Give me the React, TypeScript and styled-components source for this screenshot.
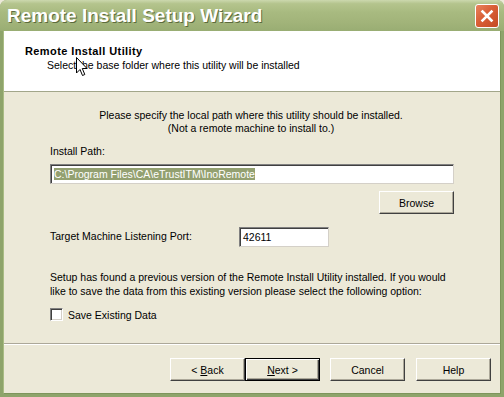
import React, { FC } from 'react';
import styled, { createGlobalStyle } from 'styled-components';

const GlobalStyle = createGlobalStyle`
  html, body {
    margin: 0;
    padding: 0;
    background: #ECE9D8;
  }
  body {
    font-family: "Liberation Sans", Arial, sans-serif;
    font-size: 10.5px;
    color: #000;
  }
`;

const Window = styled.div`
  position: relative;
  width: 504px;
  height: 397px;
  display: flex;
  flex-direction: column;
  background: #8EA46B;
  border-radius: 7px 7px 0 0;
  overflow: hidden;
  box-sizing: border-box;
`;

const TitleBar = styled.div`
  height: 31px;
  flex: none;
  display: flex;
  align-items: center;
  justify-content: space-between;
  padding: 0 5px 0 7px;
  box-sizing: border-box;
  background: linear-gradient(180deg, #CCD8AE 0%, #B4C48D 12%, #A8BA80 40%, #A2B47A 70%, #99AD73 100%);
`;

const Title = styled.div`
  font-family: "Liberation Sans", Arial, sans-serif;
  font-weight: bold;
  font-size: 19px;
  color: #fff;
  text-shadow: 1px 1px 0 #5C6B3C;
  margin-top: 1px;
`;

const CloseButton = styled.div`
  width: 22px;
  height: 22px;
  border: 1px solid #fff;
  border-radius: 3px;
  background: linear-gradient(135deg, #E8835E 0%, #D95F36 45%, #C44A22 100%);
  display: flex;
  align-items: center;
  justify-content: center;
  margin-top: 1px;
`;

const Frame = styled.div`
  flex: 1;
  display: flex;
  flex-direction: column;
  margin: 0 3px 3px;
  border-left: 1px solid #A9BC84;
  border-right: 1px solid #7E955C;
  border-bottom: 1px solid #7E955C;
  background: #ECE9D8;
`;

const Header = styled.div`
  height: 61px;
  flex: none;
  background: #fff;
  border-bottom: 1px solid #A2A68A;
  padding: 14px 0 0 21px;
  box-sizing: border-box;
`;

const HeaderTitle = styled.div`
  font-weight: bold;
  font-size: 11px;
  letter-spacing: 0.4px;
  line-height: 13px;
`;

const HeaderSub = styled.div`
  margin: 1px 0 0 22px;
  line-height: 13px;
`;

const Body = styled.div`
  flex: 1;
  display: flex;
  flex-direction: column;
  padding: 17px 46px 0 46px;
  white-space: nowrap;
`;

const Centered = styled.div`
  text-align: center;
  line-height: 13px;
  margin-right: 2px;
`;

const Label = styled.div<{ top: number }>`
  line-height: 13px;
  margin-top: ${(p) => p.top}px;
`;

const TextBox = styled.div<{ width: number }>`
  width: ${(p) => p.width}px;
  height: 20px;
  box-sizing: border-box;
  background: #fff;
  border-top: 1px solid #808080;
  border-left: 1px solid #808080;
  border-right: 1px solid #D4D0C8;
  border-bottom: 1px solid #D4D0C8;
  box-shadow: inset 1px 1px 0 #404040;
  padding: 3px 0 0 3px;
  line-height: 13px;
  white-space: nowrap;
`;

const Selected = styled.span`
  background: #93A070;
  color: #fff;
`;

const Row = styled.div<{ top: number }>`
  display: flex;
  align-items: center;
  margin-top: ${(p) => p.top}px;
`;

const RightRow = styled(Row)`
  justify-content: flex-end;
`;

const Button = styled.button<{ isDefault?: boolean }>`
  width: 75px;
  height: 23px;
  padding: 0;
  font-family: "Liberation Sans", Arial, sans-serif;
  font-size: 10.5px;
  color: #000;
  background: #ECE9D8;
  box-sizing: border-box;
  border-top: 1px solid #fff;
  border-left: 1px solid #fff;
  border-right: 1px solid #404040;
  border-bottom: 1px solid #404040;
  box-shadow: inset -1px -1px 0 #ACA899;
  ${(p) => p.isDefault && `
    border: 1px solid #000;
    box-shadow: inset 1px 1px 0 #fff, inset -1px -1px 0 #404040, inset -2px -2px 0 #ACA899;
  `}

  u {
    text-decoration: underline;
  }
`;

const Paragraph = styled.div`
  line-height: 14px;
  margin-top: 23px;
`;

const Check = styled.div`
  width: 13px;
  height: 13px;
  box-sizing: border-box;
  background: #fff;
  border-top: 1px solid #808080;
  border-left: 1px solid #808080;
  border-right: 1px solid #fff;
  border-bottom: 1px solid #fff;
  box-shadow: inset 1px 1px 0 #404040, inset -1px -1px 0 #D4D0C8;
  margin-right: 5px;
`;

const Footer = styled.div`
  flex: none;
  height: 50px;
  border-top: 1px solid #ACA899;
  box-shadow: inset 0 1px 0 #fff;
  display: flex;
  justify-content: flex-end;
  align-items: flex-start;
  padding: 14px 9px 0 0;
  box-sizing: border-box;
`;

const Gap = styled.div<{ w: number }>`
  width: ${(p) => p.w}px;
`;

const CursorWrap = styled.div`
  position: absolute;
  left: 76px;
  top: 57px;
  line-height: 0;
`;

const Cursor: FC = () => (
  <CursorWrap>
    <svg width="12" height="20" viewBox="0 0 12 20">
      <path d="M0.5 0.5 L0.5 16 L4 12.5 L6.5 18.5 L8.8 17.5 L6.3 11.5 L11 11.5 Z" fill="#fff" stroke="#000" strokeWidth="1" />
    </svg>
  </CursorWrap>
);

const App: FC = () => (
  <>
    <GlobalStyle />
    <Window>
      <TitleBar>
        <Title>Remote Install Setup Wizard</Title>
        <CloseButton>
          <svg width="14" height="14" viewBox="0 0 14 14">
            <path d="M2.5 2.5 L11.5 11.5 M11.5 2.5 L2.5 11.5" stroke="#fff" strokeWidth="2.6" strokeLinecap="square" />
          </svg>
        </CloseButton>
      </TitleBar>
      <Frame>
        <Header>
          <HeaderTitle>Remote Install Utility</HeaderTitle>
          <HeaderSub>Select the base folder where this utility will be installed</HeaderSub>
        </Header>
        <Body>
          <Centered>
            Please specify the local path where this utility should be installed.
            <br />
            (Not a remote machine to install to.)
          </Centered>
          <Label top={10}>Install Path:</Label>
          <Row top={6}>
            <TextBox width={404}>
              <Selected>C:\Program Files\CA\eTrustITM\InoRemote</Selected>
            </TextBox>
          </Row>
          <RightRow top={7}>
            <Button>Browse</Button>
          </RightRow>
          <Row top={13} style={{ alignItems: 'flex-start' }}>
            <Label top={3} style={{ width: 189 }}>Target Machine Listening Port:</Label>
            <TextBox width={90}>42611</TextBox>
          </Row>
          <Paragraph>
            Setup has found a previous version of the Remote Install Utility installed. If you would
            <br />
            like to save the data from this existing version please select the following option:
          </Paragraph>
          <Row top={10}>
            <Check />
            <span>Save Existing Data</span>
          </Row>
        </Body>
        <Footer>
          <Button>&lt; <u>B</u>ack</Button>
          <Button isDefault><u>N</u>ext &gt;</Button>
          <Gap w={10} />
          <Button>Cancel</Button>
          <Gap w={11} />
          <Button>Help</Button>
        </Footer>
      </Frame>
      <Cursor />
    </Window>
  </>
);

export default App;
